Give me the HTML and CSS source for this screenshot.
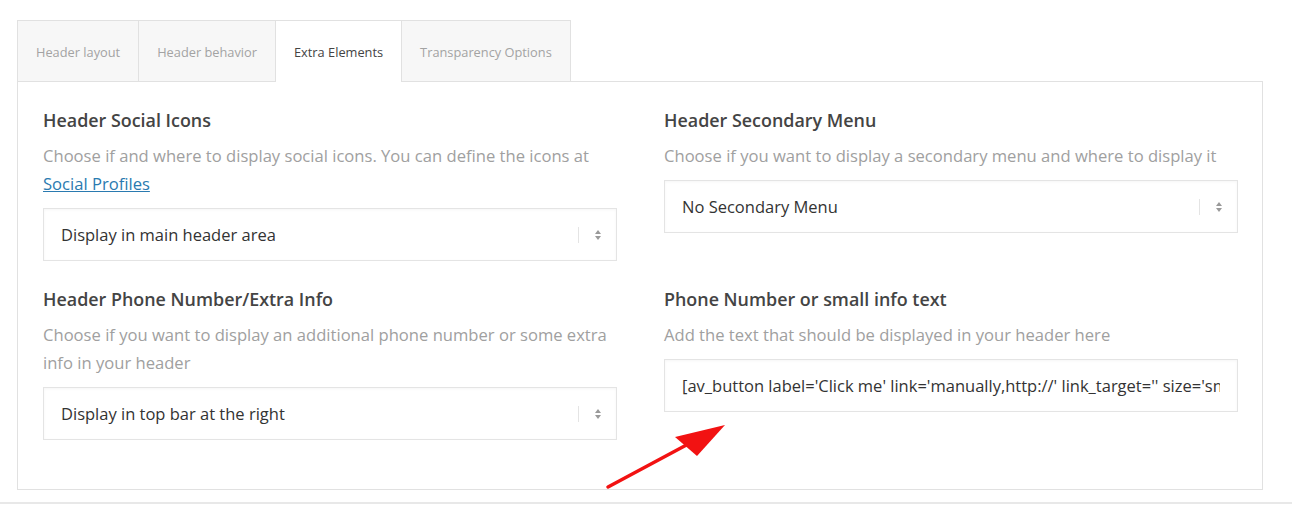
FILE: index.html
```html
<!DOCTYPE html>
<html lang="en">
<head>
    <meta charset="UTF-8">
    <title>Header Options</title>
    <link rel="stylesheet" href="styles.css">
</head>
<body>
    <div class="page">
        <div class="tabs">
            <div class="tab">Header layout</div>
            <div class="tab">Header behavior</div>
            <div class="tab active">Extra Elements</div>
            <div class="tab">Transparency Options</div>
        </div>

        <div class="panel">
            <div class="option">
                <h4>Header Social Icons</h4>
                <p class="desc">Choose if and where to display social icons. You can define the icons at <a href="#">Social Profiles</a></p>
                <div class="select">
                    <span>Display in main header area</span>
                    <span class="select-arrows"><i class="up"></i><i class="down"></i></span>
                </div>
            </div>

            <div class="option">
                <h4>Header Secondary Menu</h4>
                <p class="desc">Choose if you want to display a secondary menu and where to display it</p>
                <div class="select">
                    <span>No Secondary Menu</span>
                    <span class="select-arrows"><i class="up"></i><i class="down"></i></span>
                </div>
            </div>

            <div class="option">
                <h4>Header Phone Number/Extra Info</h4>
                <p class="desc">Choose if you want to display an additional phone number or some extra info in your header</p>
                <div class="select">
                    <span>Display in top bar at the right</span>
                    <span class="select-arrows"><i class="up"></i><i class="down"></i></span>
                </div>
            </div>

            <div class="option">
                <h4>Phone Number or small info text</h4>
                <p class="desc">Add the text that should be displayed in your header here</p>
                <input class="text-input" type="text" value="[av_button label='Click me' link='manually,http://' link_target='' size='small' position='center' icon_select='no' color='theme-color']">
            </div>
        </div>

        <svg class="pointer" width="140" height="80" viewBox="0 0 140 80">
            <line x1="8" y1="72" x2="92" y2="27" stroke="#f21212" stroke-width="3.5" stroke-linecap="round"/>
            <polygon points="125,10 75,22 97,41" fill="#f21212"/>
        </svg>
    </div>
    <div class="footer-line"></div>
</body>
</html>
```

FILE: styles.css
```css
body {
    margin: 0;
    background: #fff;
    font-family: "Open Sans", "Noto Sans", sans-serif;
    color: #444;
}

.page {
    position: relative;
    padding: 20px 29px 0 17px;
}

.tabs {
    display: flex;
}

.tab {
    height: 60px;
    line-height: 62px;
    padding: 0 18px;
    font-size: 12.8px;
    color: #a3a3a3;
    background: #f7f7f7;
    border: 1px solid #e1e1e1;
    border-bottom: none;
    margin-right: -1px;
}

.tab.active {
    background: #fff;
    color: #444;
    height: 61px;
    margin-bottom: -1px;
    position: relative;
}

.panel {
    border: 1px solid #e1e1e1;
    padding: 26px 24px 49px 25px;
    display: grid;
    grid-template-columns: 1fr 1fr;
    column-gap: 47px;
    row-gap: 26px;
}

.option h4 {
    margin: 0;
    font-size: 17.9px;
    font-weight: 600;
    line-height: 24px;
    color: #444;
}

.desc {
    margin: 10px 0 10px;
    font-size: 16.6px;
    line-height: 28px;
    color: #a0a0a0;
}

.desc a {
    color: #2a7ab0;
}

.select {
    height: 51px;
    border: 1px solid #e4e4e4;
    box-shadow: inset 0 1px 3px rgba(0, 0, 0, 0.04);
    display: flex;
    align-items: center;
    padding-left: 17px;
    font-size: 16.5px;
    color: #333;
}

.select span:first-child {
    flex: 1;
}

.select-arrows {
    width: 37px;
    height: 16px;
    border-left: 1px solid #e4e4e4;
    display: flex;
    flex-direction: column;
    align-items: center;
    justify-content: center;
    gap: 2px;
}

.select-arrows i {
    width: 0;
    height: 0;
    border-left: 3px solid transparent;
    border-right: 3px solid transparent;
}

.select-arrows .up {
    border-bottom: 4px solid #9a9a9a;
}

.select-arrows .down {
    border-top: 4px solid #9a9a9a;
}

.text-input {
    display: block;
    width: 100%;
    box-sizing: border-box;
    height: 53px;
    border: 1px solid #e4e4e4;
    box-shadow: inset 0 1px 3px rgba(0, 0, 0, 0.04);
    padding: 0 17px;
    font-family: inherit;
    font-size: 16.5px;
    color: #333;
    outline: none;
}

.pointer {
    position: absolute;
    left: 600px;
    top: 415px;
}

.footer-line {
    margin-top: 12px;
    border-top: 2px solid #e8e8e8;
}
```
